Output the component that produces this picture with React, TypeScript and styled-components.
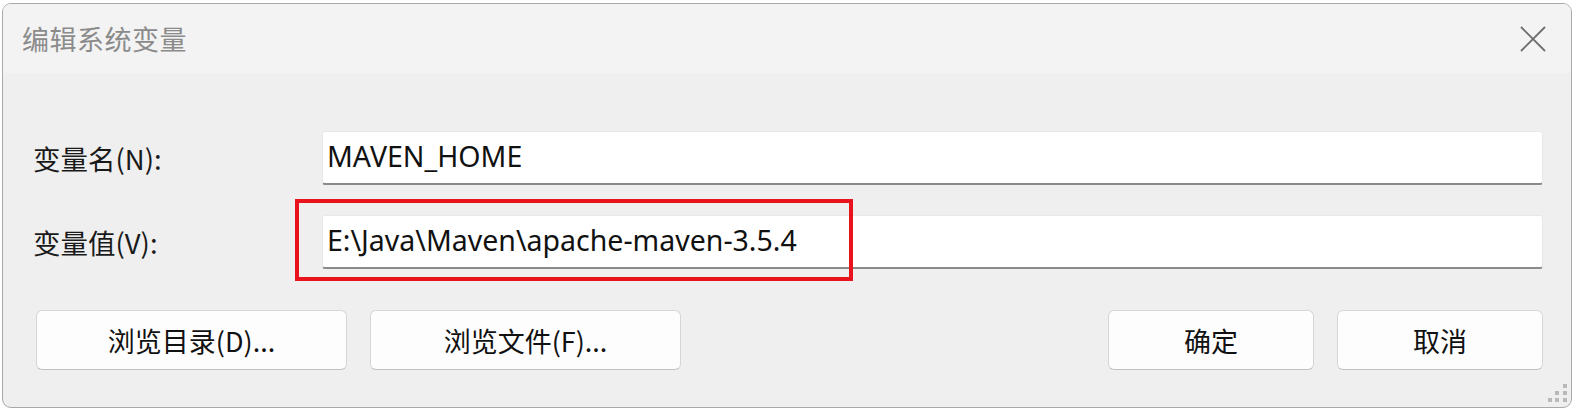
import React from 'react';
import styled, { createGlobalStyle } from 'styled-components';

const GlobalStyle = createGlobalStyle`
    html, body {
        margin: 0;
        padding: 0;
        background: #ffffff;
    }
    body {
        font-family: 'Noto Sans', 'Noto Sans CJK SC', sans-serif;
    }
`;

const Page = styled.div`
    width: 1574px;
    height: 408px;
    padding: 3px 2px 0 2px;
    box-sizing: border-box;
`;

const Window = styled.div`
    position: relative;
    height: 405px;
    box-sizing: border-box;
    border: 1px solid #a9a9a9;
    border-radius: 9px;
    background: #efefef;
    overflow: hidden;
    display: flex;
    flex-direction: column;
`;

const TitleBar = styled.div`
    height: 69px;
    flex: none;
    background: #f3f3f3;
    display: flex;
    align-items: center;
    justify-content: space-between;
    padding: 0 24px 0 19px;
`;

const Title = styled.span`
    font-family: 'Noto Sans CJK SC', sans-serif;
    font-size: 27px;
    color: #8b8b8b;
    letter-spacing: 0.5px;
`;

const CloseButton = styled.div`
    width: 28px;
    height: 28px;
    display: flex;
    align-items: center;
    justify-content: center;
`;

const Body = styled.div`
    flex: 1;
    display: flex;
    flex-direction: column;
    padding: 58px 28px 0 30px;
`;

const Field = styled.div<{ $gap?: number }>`
    display: grid;
    grid-template-columns: 289px 1fr;
    align-items: center;
    margin-bottom: ${(p) => p.$gap ?? 0}px;
`;

const Label = styled.label`
    font-family: 'Noto Sans CJK SC', sans-serif;
    font-size: 27.5px;
    color: #1a1a1a;
    padding-left: 0;
`;

const InputWrap = styled.div`
    position: relative;
`;

const TextBox = styled.div`
    height: 54px;
    box-sizing: border-box;
    background: #ffffff;
    border: 1px solid #e8e8e8;
    border-bottom: 2px solid #8a8a8a;
    border-radius: 3px;
    display: flex;
    align-items: center;
    padding: 0 0 4px 4px;
    font-family: 'Noto Sans', 'Noto Sans CJK SC', sans-serif;
    font-size: 28.5px;
    color: #111111;
`;

const Highlight = styled.div`
    position: absolute;
    left: -27px;
    top: -16px;
    width: 558px;
    height: 82px;
    box-sizing: border-box;
    border: 4px solid #e8131c;
    pointer-events: none;
`;

const ButtonRow = styled.div`
    display: flex;
    align-items: center;
    margin-top: 41px;
    padding-left: 3px;
`;

const ButtonGroup = styled.div`
    display: flex;
    gap: 23px;
`;

const Spacer = styled.div`
    flex: 1;
`;

const Button = styled.button<{ $wide?: boolean }>`
    width: ${(p) => (p.$wide ? 311 : 206)}px;
    height: 60px;
    box-sizing: border-box;
    background: #fdfdfd;
    border: 1px solid #d6d6d6;
    border-bottom-color: #c2c2c2;
    border-radius: 6px;
    font-family: 'Noto Sans CJK SC', sans-serif;
    font-size: 27px;
    color: #111111;
    padding: 0;
    cursor: default;
`;

const Grip = styled.svg`
    position: absolute;
    right: 3px;
    bottom: 4px;
`;

const CloseIcon = () => (
    <svg width='28' height='28' viewBox='0 0 28 28'>
        <path d='M2 2 L26 26 M26 2 L2 26' stroke='#6e6e6e' strokeWidth='1.8' fill='none' />
    </svg>
);

const ResizeGrip = () => (
    <Grip width='20' height='20' viewBox='0 0 20 20'>
        <g fill='#b9b9b9'>
            <rect x='15' y='1' width='4' height='4' />
            <rect x='7' y='8' width='4' height='4' />
            <rect x='15' y='8' width='4' height='4' />
            <rect x='0' y='15' width='4' height='4' />
            <rect x='7' y='15' width='4' height='4' />
            <rect x='15' y='15' width='4' height='4' />
        </g>
    </Grip>
);

const App = () => (
    <>
        <GlobalStyle />
        <Page>
            <Window>
                <TitleBar>
                    <Title>编辑系统变量</Title>
                    <CloseButton>
                        <CloseIcon />
                    </CloseButton>
                </TitleBar>

                <Body>
                    <Field $gap={30}>
                        <Label>变量名(N):</Label>
                        <InputWrap>
                            <TextBox>MAVEN_HOME</TextBox>
                        </InputWrap>
                    </Field>
                    <Field>
                        <Label>变量值(V):</Label>
                        <InputWrap>
                            <TextBox>E:\Java\Maven\apache-maven-3.5.4</TextBox>
                            {/* annotation box drawn over the value field */}
                            <Highlight />
                        </InputWrap>
                    </Field>

                    <ButtonRow>
                        <ButtonGroup>
                            <Button $wide>浏览目录(D)...</Button>
                            <Button $wide>浏览文件(F)...</Button>
                        </ButtonGroup>
                        <Spacer />
                        <ButtonGroup>
                            <Button>确定</Button>
                            <Button>取消</Button>
                        </ButtonGroup>
                    </ButtonRow>
                </Body>

                <ResizeGrip />
            </Window>
        </Page>
    </>
);

export default App;
